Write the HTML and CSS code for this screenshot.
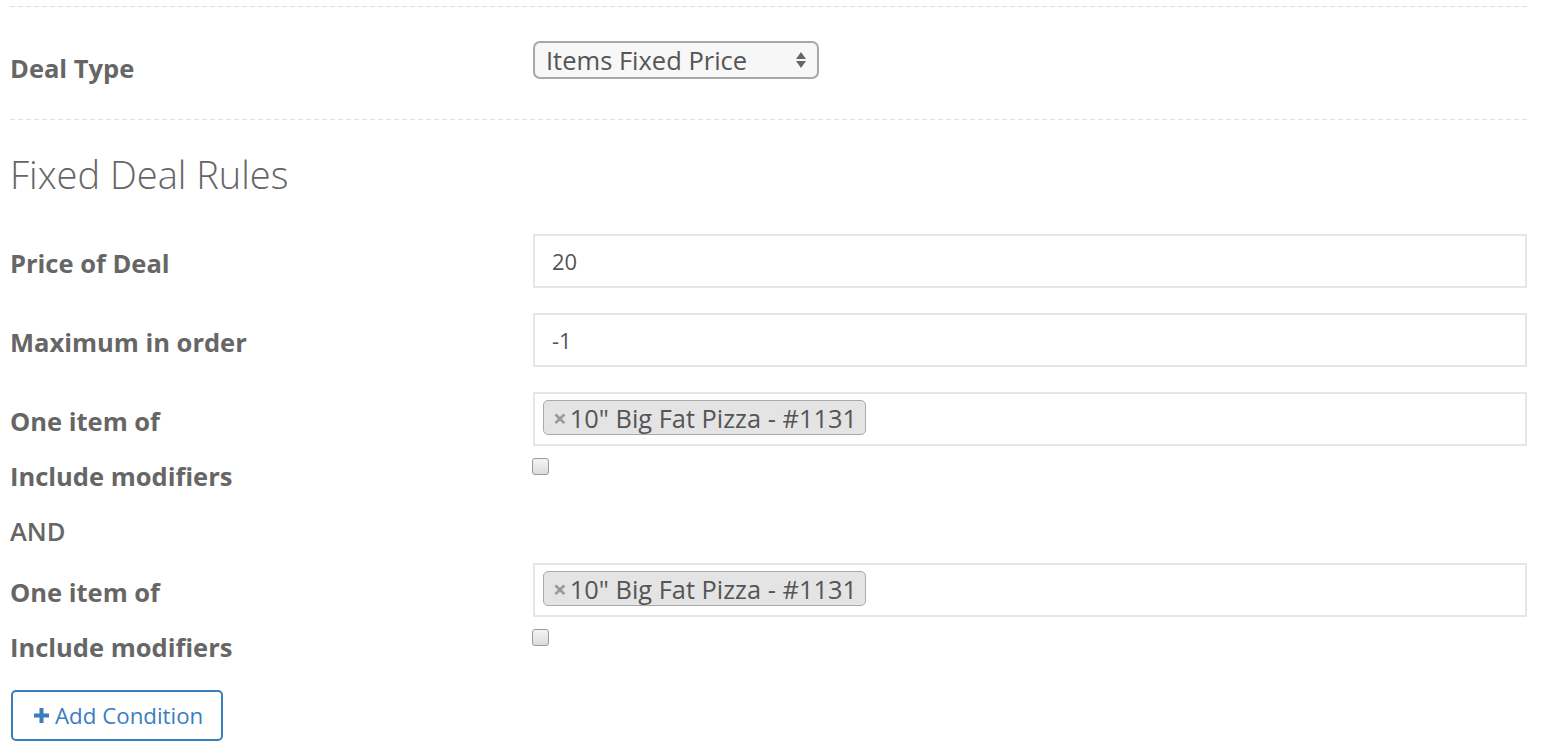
FILE: index.html
```html
<!DOCTYPE html>
<html lang="en">
<head>
    <meta charset="UTF-8">
    <meta name="viewport" content="width=device-width, initial-scale=1.0">
    <title>Deal</title>
    <link rel="stylesheet" href="styles.css">
</head>
<body>
    <section class="wrap">
        <div class="divider"></div>
        <div class="field field-type">
            <label class="label">Deal Type</label>
            <div class="select">
                <span>Items Fixed Price</span>
                <svg class="arrows" width="12" height="18" viewBox="0 0 12 18">
                    <path d="M6 1 L11 8 L1 8 Z" fill="#666"/>
                    <path d="M6 17 L11 10 L1 10 Z" fill="#666"/>
                </svg>
            </div>
        </div>
        <div class="divider"></div>

        <h3 class="title">Fixed Deal Rules</h3>

        <div class="field field-input">
            <label class="label">Price of Deal</label>
            <div class="input">20</div>
        </div>
        <div class="field field-input">
            <label class="label">Maximum in order</label>
            <div class="input">-1</div>
        </div>

        <div class="condition">
            <div class="field field-input">
                <label class="label">One item of</label>
                <div class="input tags">
                    <span class="tag"><i class="tag-x">&times;</i>10" Big Fat Pizza - #1131</span>
                </div>
            </div>
            <div class="field field-check">
                <label class="label">Include modifiers</label>
                <div><input type="checkbox" class="check"></div>
            </div>
        </div>

        <p class="and">AND</p>

        <div class="condition">
            <div class="field field-input">
                <label class="label">One item of</label>
                <div class="input tags">
                    <span class="tag"><i class="tag-x">&times;</i>10" Big Fat Pizza - #1131</span>
                </div>
            </div>
            <div class="field field-check">
                <label class="label">Include modifiers</label>
                <div><input type="checkbox" class="check"></div>
            </div>
        </div>

        <a href="javascript:;" class="btn">
            <svg class="plus" width="15" height="15" viewBox="0 0 15 15">
                <path d="M5.5 0 H9.5 V5.5 H15 V9.5 H9.5 V15 H5.5 V9.5 H0 V5.5 H5.5 Z" fill="#3a7dbf"/>
            </svg>
            Add Condition
        </a>
    </section>
</body>
</html>
```

FILE: styles.css
```css
* {
    margin: 0;
    padding: 0;
    box-sizing: border-box;
}

body {
    font-family: "Open Sans", "Liberation Sans", sans-serif;
    color: #666;
    background: #fff;
}

.wrap {
    padding: 6px 29px 0 10px;
}

.divider {
    height: 1px;
    background: repeating-linear-gradient(to right, #dadfe4 0, #dadfe4 5px, transparent 5px, transparent 8px);
}

.field {
    display: grid;
    grid-template-columns: 523px 1fr;
    align-items: start;
}

.label {
    font-size: 25.5px;
    line-height: 34px;
    font-weight: 700;
    color: #666;
}

/* deal type */
.field-type {
    height: 112px;
    padding-top: 34px;
}

.field-type .label {
    padding-top: 10px;
}

.select {
    width: 286px;
    height: 38px;
    border: 2px solid #a8a8a8;
    border-radius: 7px;
    background: #f7f7f7;
    display: flex;
    align-items: center;
    justify-content: space-between;
    padding: 0 10px 0 11px;
    font-size: 25.5px;
    color: #555;
}

.title {
    font-size: 38px;
    line-height: 46px;
    font-weight: 300;
    color: #666;
    margin: 31px 0 37px;
}

/* inputs */
.field-input {
    margin-bottom: 25px;
}

.field-input .label {
    padding-top: 12px;
}

.input {
    height: 54px;
    border: 2px solid #e6e6e6;
    padding: 0 17px;
    display: flex;
    align-items: center;
    font-size: 22px;
    color: #555;
}

.tags {
    padding: 6px 8px 0;
    align-items: flex-start;
}

.tag {
    display: inline-flex;
    align-items: center;
    height: 35px;
    padding: 0 8px 0 9px;
    border: 1px solid #aaa;
    border-radius: 5px;
    background: #e4e4e4;
    font-size: 25.4px;
    color: #555;
}

.tag-x {
    font-style: normal;
    color: #999;
    font-size: 24px;
    font-weight: 700;
    margin-right: 3px;
}

.condition .field-input {
    margin-bottom: 10px;
}

.field-check .label {
    padding-top: 3px;
}

.check {
    appearance: none;
    display: block;
    width: 17px;
    height: 17px;
    margin-top: 2px;
    margin-left: -1px;
    border: 1px solid #9a9a9a;
    border-radius: 3px;
    background: linear-gradient(#f4f4f4, #dcdcdc);
}

.and {
    font-size: 25.5px;
    line-height: 34px;
    font-weight: 600;
    margin: 21px 0 15px;
}

.btn {
    display: inline-flex;
    align-items: center;
    gap: 6px;
    margin-top: 26px;
    margin-left: 1px;
    height: 51px;
    width: 212px;
    padding-left: 21px;
    border: 2px solid #3a7dbf;
    border-radius: 5px;
    font-size: 22.3px;
    color: #3a7dbf;
    text-decoration: none;
}
```
